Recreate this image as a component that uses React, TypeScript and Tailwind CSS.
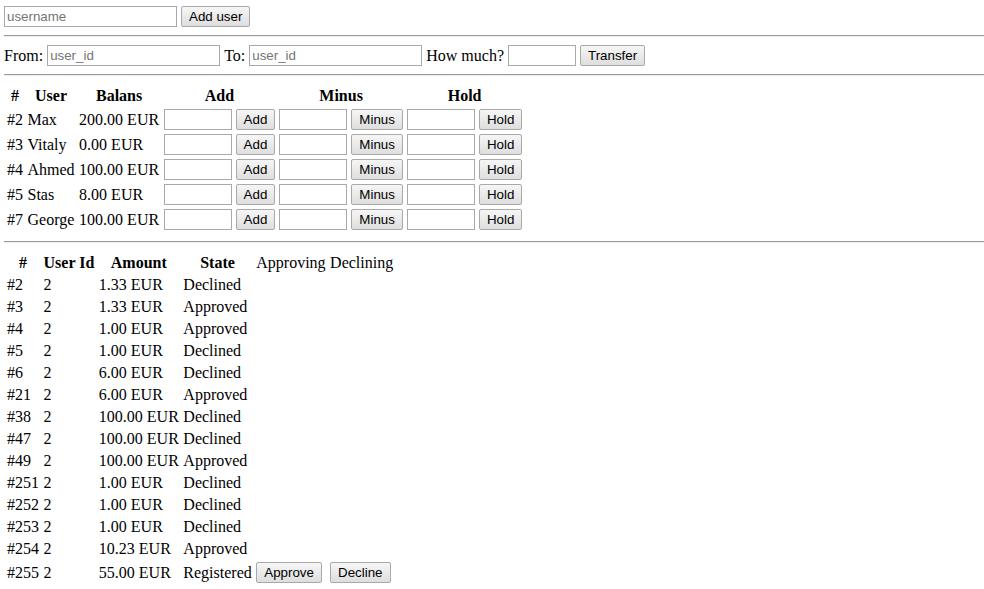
import React from 'react';

const users = [
    { id: 2, name: 'Max', balance: '200.00' },
    { id: 3, name: 'Vitaly', balance: '0.00' },
    { id: 4, name: 'Ahmed', balance: '100.00' },
    { id: 5, name: 'Stas', balance: '8.00' },
    { id: 7, name: 'George', balance: '100.00' },
];

const transactions = [
    { id: 2, userId: 2, amount: '1.33', state: 'Declined' },
    { id: 3, userId: 2, amount: '1.33', state: 'Approved' },
    { id: 4, userId: 2, amount: '1.00', state: 'Approved' },
    { id: 5, userId: 2, amount: '1.00', state: 'Declined' },
    { id: 6, userId: 2, amount: '6.00', state: 'Declined' },
    { id: 21, userId: 2, amount: '6.00', state: 'Approved' },
    { id: 38, userId: 2, amount: '100.00', state: 'Declined' },
    { id: 47, userId: 2, amount: '100.00', state: 'Declined' },
    { id: 49, userId: 2, amount: '100.00', state: 'Approved' },
    { id: 251, userId: 2, amount: '1.00', state: 'Declined' },
    { id: 252, userId: 2, amount: '1.00', state: 'Declined' },
    { id: 253, userId: 2, amount: '1.00', state: 'Declined' },
    { id: 254, userId: 2, amount: '10.23', state: 'Approved' },
    { id: 255, userId: 2, amount: '55.00', state: 'Registered' },
];

function Input({ wide, placeholder }: { wide?: boolean; placeholder?: string }) {
    return (
        <input
            type="text"
            placeholder={placeholder}
            className={
                (wide ? 'w-[173px]' : 'w-[68px]') +
                " h-[21px] border border-[#a9a9a9] bg-white px-[2px] font-['Liberation_Sans',Arial,sans-serif] text-[13.333px] text-black placeholder:text-[#757575] outline-none"
            }
        />
    );
}

function Button({ children }: { children: React.ReactNode }) {
    return (
        <button className="h-[21px] rounded-[2px] border border-[#a9a9a9] bg-linear-to-b from-[#f6f6f6] to-[#dedede] px-[7px] font-['Liberation_Sans',Arial,sans-serif] text-[13.333px] leading-none text-black">
            {children}
        </button>
    );
}

function Rule() {
    return <hr className="my-[8px] h-0 border-t border-b border-t-[#9a9a9a] border-b-[#eeeeee]" />;
}

const th = 'py-[1px] pl-[1px] pr-[1.5px] text-center font-bold align-middle';
const td = 'py-[1px] pl-[1px] pr-[1.5px] text-left align-middle whitespace-nowrap';
// cells holding form controls keep the plain 1px padding
const thc = 'p-[1px] text-center font-bold align-middle';
const tc = 'p-[1px] text-left align-middle whitespace-nowrap';

export default function App() {
    return (
        <div className="min-h-[589px] bg-white pl-[4px] pt-[6px] font-['Liberation_Serif','Times_New_Roman',serif] text-[16px] leading-[normal] text-black">
            {/* New user */}
            <div className="flex h-[21px] items-center gap-[4px]">
                <Input wide placeholder="username" />
                <Button>Add user</Button>
            </div>

            <Rule />

            {/* Transfer */}
            <div className="flex h-[21px] items-center gap-[4px]">
                <span>From:</span>
                <Input wide placeholder="user_id" />
                <span>To:</span>
                <Input wide placeholder="user_id" />
                <span>How much?</span>
                <Input />
                <Button>Transfer</Button>
            </div>

            <Rule />

            {/* Users */}
            <table className="border-separate border-spacing-[2px]">
                <thead>
                    <tr>
                        <th className={th}>#</th>
                        <th className={th}>User</th>
                        <th className={th}>Balans</th>
                        <th className={thc} colSpan={2}>Add</th>
                        <th className={thc} colSpan={2}>Minus</th>
                        <th className={thc} colSpan={2}>Hold</th>
                    </tr>
                </thead>
                <tbody>
                    {users.map((u) => (
                        <tr key={u.id}>
                            <td className={td}>#{u.id}</td>
                            <td className={td}>{u.name}</td>
                            <td className={td}>{u.balance} EUR</td>
                            <td className={tc}><Input /></td>
                            <td className={tc}><Button>Add</Button></td>
                            <td className={tc}><Input /></td>
                            <td className={tc}><Button>Minus</Button></td>
                            <td className={tc}><Input /></td>
                            <td className={tc}><Button>Hold</Button></td>
                        </tr>
                    ))}
                </tbody>
            </table>

            <Rule />

            {/* Transactions */}
            <table className="border-separate border-spacing-[2px]">
                <thead>
                    <tr>
                        <th className={th}>#</th>
                        <th className={th}>User Id</th>
                        <th className={th}>Amount</th>
                        <th className={th}>State</th>
                        <td className={td}>Approving</td>
                        <td className={td}>Declining</td>
                    </tr>
                </thead>
                <tbody>
                    {transactions.map((t) => (
                        <tr key={t.id}>
                            <td className={td}>#{t.id}</td>
                            <td className={td}>{t.userId}</td>
                            <td className={td}>{t.amount} EUR</td>
                            <td className={td}>{t.state}</td>
                            {t.state === 'Registered' ? (
                                <>
                                    <td className={td}><Button>Approve</Button></td>
                                    <td className={td}><Button>Decline</Button></td>
                                </>
                            ) : (
                                <>
                                    <td className={td} />
                                    <td className={td} />
                                </>
                            )}
                        </tr>
                    ))}
                </tbody>
            </table>

            <Rule />
        </div>
    );
}
